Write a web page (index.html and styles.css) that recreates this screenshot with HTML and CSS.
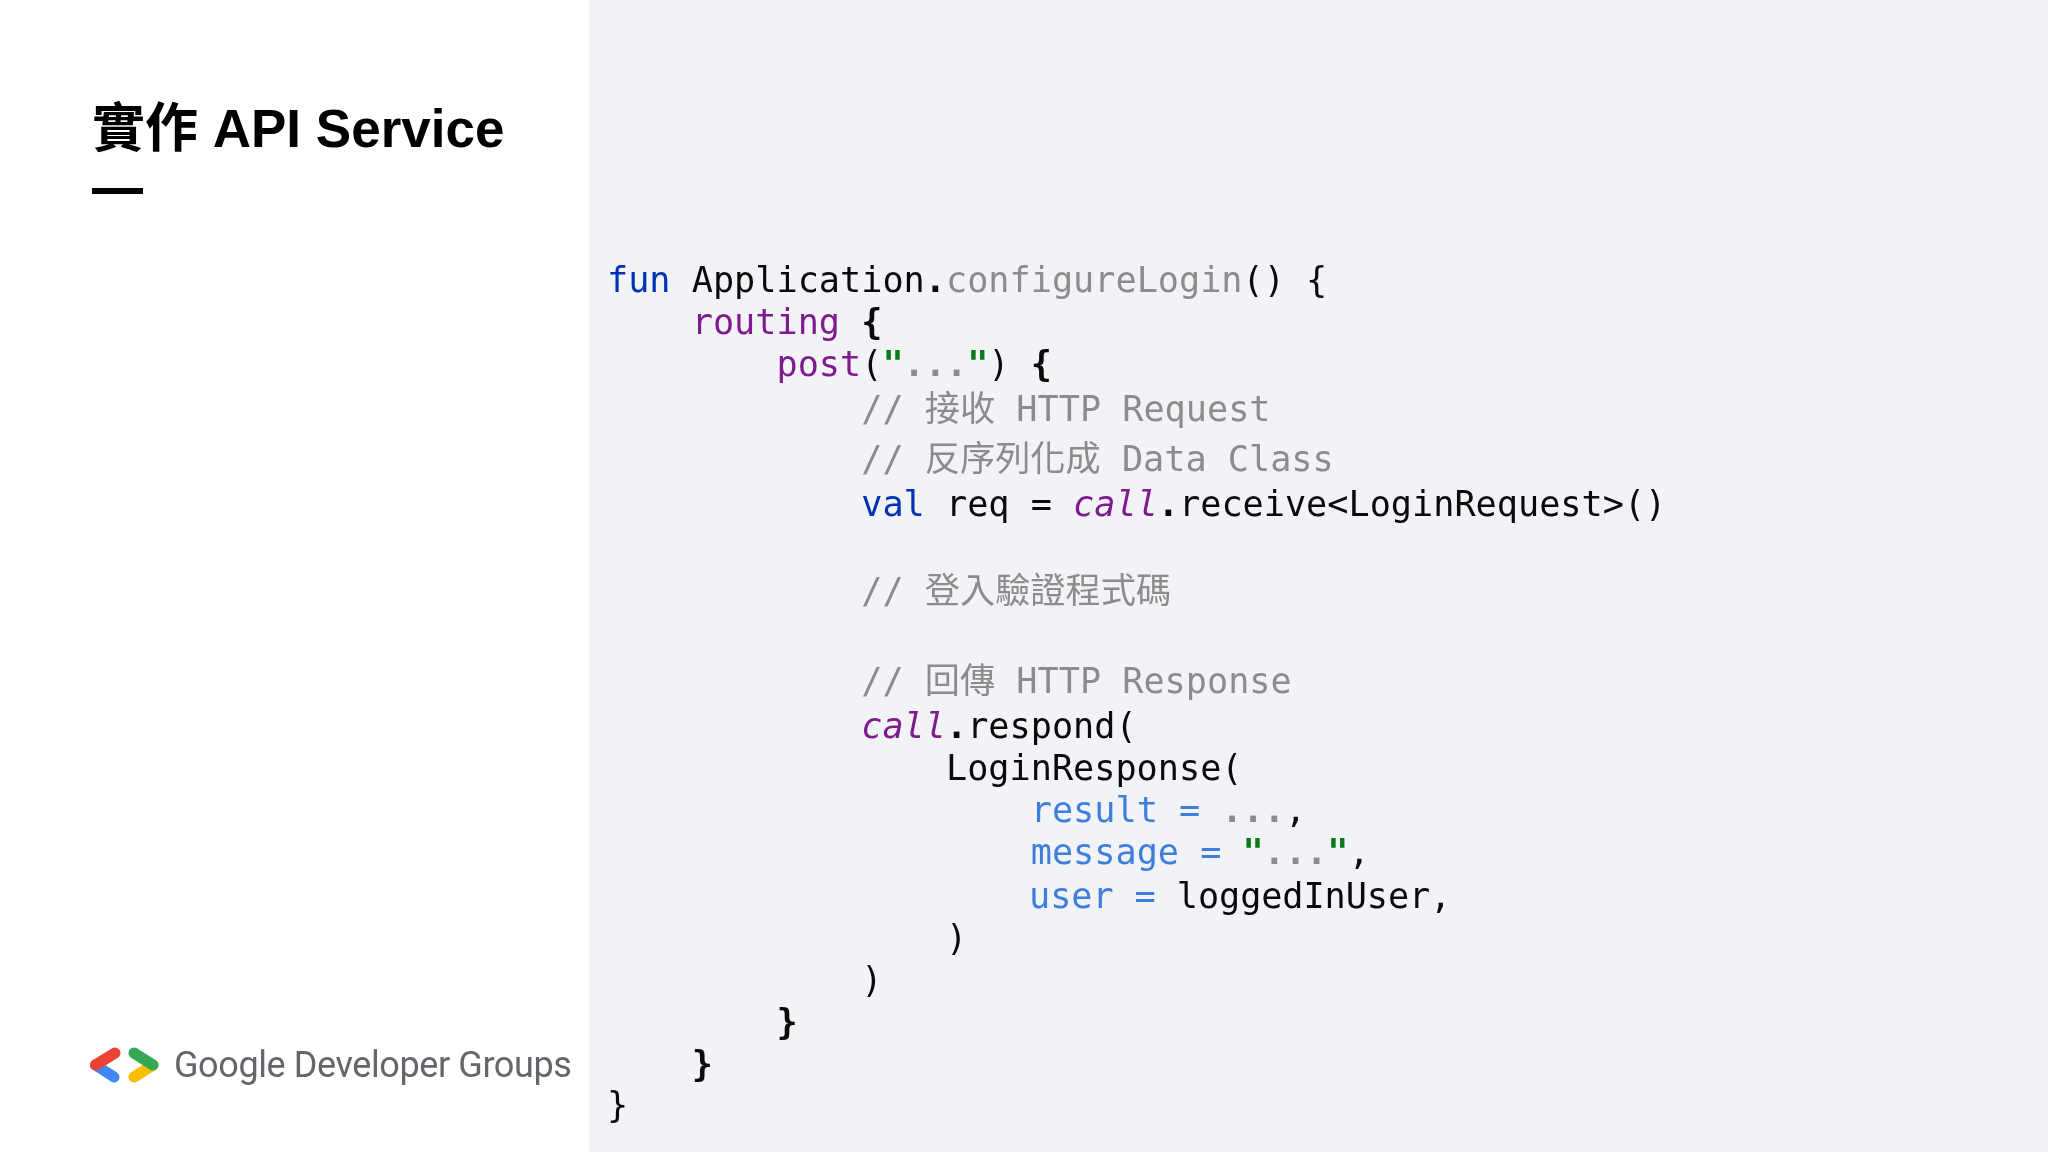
FILE: index.html
```html
<!DOCTYPE html>
<html lang="zh-Hant">
<head>
<meta charset="utf-8">
<title>實作 API Service</title>
<link rel="stylesheet" href="styles.css">
</head>
<body>
<div class="slide">
  <aside class="side">
    <h1 class="title">實作 API Service</h1>
    <div class="rule"></div>
    <div class="brand">
      <svg class="brand-icon" width="71" height="36" viewBox="0 0 71 36" aria-hidden="true">
        <path class="s-blue" d="M6.5 18 L25 30"/>
        <path class="s-red" d="M26 6 L6.5 18"/>
        <path class="s-yellow" d="M64 18 L45 30"/>
        <path class="s-green" d="M45 6 L64 18"/>
      </svg>
      <span class="brand-text">Google Developer Groups</span>
    </div>
  </aside>
  <main class="code">
<div class="ln"><span class="kw">fun</span> Application<b>.</b><span class="mute">configureLogin</span>() {</div>
<div class="ln">    <span class="fn">routing</span> <b>{</b></div>
<div class="ln">        <span class="fn">post</span>(<b class="str">"</b><b class="mute">...</b><b class="str">"</b>) <b>{</b></div>
<div class="ln cmt l1">            // 接收 HTTP Request</div>
<div class="ln cmt l2">            // 反序列化成 Data Class</div>
<div class="ln l3">            <span class="kw">val</span> req = <i class="fn">call</i><b>.</b>receive&lt;LoginRequest&gt;()</div>
<div class="ln cmt l4">            // 登入驗證程式碼</div>
<div class="ln cmt l5">            // 回傳 HTTP Response</div>
<div class="ln l6">            <i class="fn">call</i><b>.</b>respond(</div>
<div class="ln">                LoginResponse(</div>
<div class="ln">                    <span class="arg">result =</span> <b class="mute">...</b>,</div>
<div class="ln">                    <span class="arg">message =</span> <b class="str">"</b><b class="mute">...</b><b class="str">"</b>,</div>
<div class="ln l7">                    <span class="arg">user =</span> loggedInUser,</div>
<div class="ln">                )</div>
<div class="ln">            )</div>
<div class="ln">        <b>}</b></div>
<div class="ln">    <b>}</b></div>
<div class="ln l8">}</div>
  </main>
</div>
</body>
</html>
```
FILE: styles.css
```css
html, body {
  margin: 0;
  padding: 0;
  background: #fff;
}
.slide {
  display: flex;
  width: 2048px;
  height: 1152px;
  overflow: hidden;
  filter: blur(0.4px);
}
.side {
  width: 589px;
  flex: none;
  box-sizing: border-box;
  padding: 97px 0 0 92px;
  display: flex;
  flex-direction: column;
  background: #fff;
}
.title {
  margin: 0;
  font: 700 53px/1.2 "Liberation Sans", "Noto Sans CJK TC", sans-serif;
  color: #000;
  white-space: nowrap;
}
.rule {
  width: 51px;
  height: 6px;
  margin-top: 27px;
  background: #000;
}
.brand {
  margin-top: auto;
  margin-left: -3px;
  margin-bottom: 69px;
  display: flex;
  align-items: center;
  gap: 14px;
}
.brand-icon path {
  fill: none;
  stroke-width: 11;
  stroke-linecap: round;
}
.s-red { stroke: #ea4335; }
.s-blue { stroke: #4285f4; }
.s-green { stroke: #34a853; }
.s-yellow { stroke: #fbbc04; }
.brand-text {
  font: 400 36px/1 "Roboto", sans-serif;
  letter-spacing: -0.4px;
  color: #63676b;
  white-space: nowrap;
}
.code {
  flex: 1;
  background: #f1f3f7;
  box-sizing: border-box;
  padding: 259px 0 0 18px;
  font: 400 35.2px/42px "DejaVu Sans Mono", "Noto Sans CJK TC", monospace;
  color: #0a0a0a;
}
.ln {
  white-space: pre;
  height: 42px;
}
.ln b { font-weight: 700; }
.kw { color: #0033b3; }
.fn { color: #7f1a8f; }
.str { color: #067d17; }
.mute { color: #8c8c8c; }
.cmt { color: #8c8c8c; }
.arg { color: #3f7fdc; }
.l1 { margin-top: 3px; }
.l2 { margin-top: 8px; }
.l3 { margin-top: 3px; }
.l4 { margin-top: 45px; }
.l5 { margin-top: 48px; }
.l6 { margin-top: 3px; }
.l7 { margin-top: 2px; letter-spacing: -0.08px; }
.l8 { margin-top: -1px; }
```
